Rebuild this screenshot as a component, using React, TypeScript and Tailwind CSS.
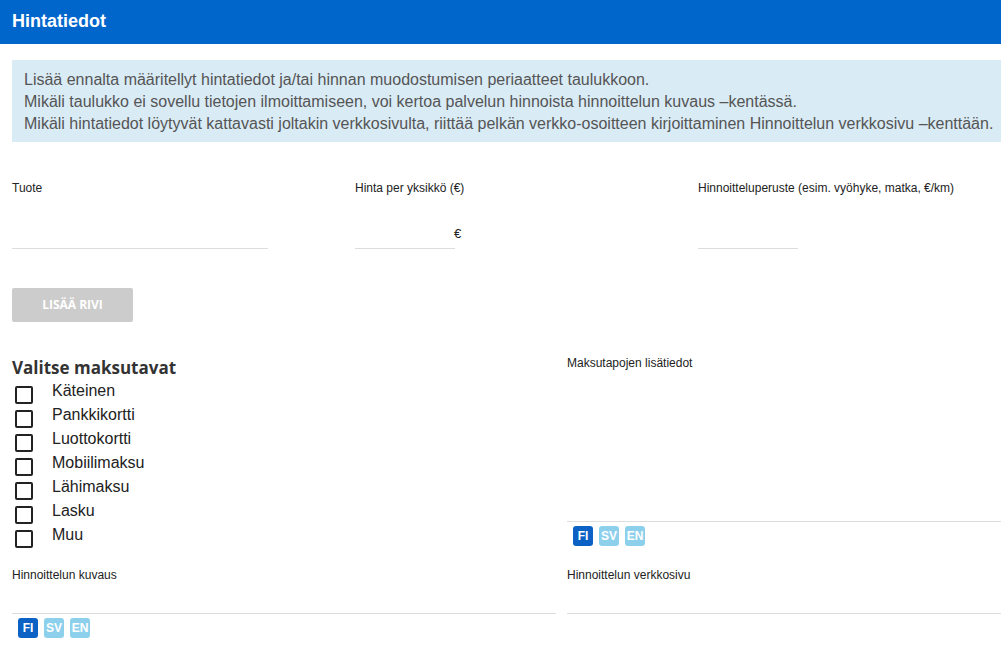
import React from "react";

const Badges = () => (
  <div className="flex gap-[6px]">
    <span className="w-[20px] h-[20px] rounded-[3px] bg-[#0b62c4] text-white text-[12px] font-bold flex items-center justify-center leading-none">FI</span>
    <span className="w-[20px] h-[20px] rounded-[3px] bg-[#8dd0ec] text-white text-[12px] font-bold flex items-center justify-center leading-none">SV</span>
    <span className="w-[20px] h-[20px] rounded-[3px] bg-[#8dd0ec] text-white text-[12px] font-bold flex items-center justify-center leading-none">EN</span>
  </div>
);

const methods = ["Käteinen", "Pankkikortti", "Luottokortti", "Mobiilimaksu", "Lähimaksu", "Lasku", "Muu"];

export default function App() {
  return (
    <div className="w-[1001px] h-[651px] overflow-hidden bg-white text-[#222]" style={{ fontFamily: '"Liberation Sans", Arial, sans-serif' }}>
      <div className="h-[44px] bg-[#0066cc] flex items-center pl-[12px]">
        <h1 className="text-white text-[18px] font-bold -mt-[2px]">Hintatiedot</h1>
      </div>
      <div className="pl-[12px]">
        <div className="mt-[16px] bg-[#d9ebf5] pl-[12px] pt-[9px] pb-[7px] text-[16px] leading-[22px] text-[#555] whitespace-nowrap">
          <div>Lisää ennalta määritellyt hintatiedot ja/tai hinnan muodostumisen periaatteet taulukkoon.</div>
          <div>Mikäli taulukko ei sovellu tietojen ilmoittamiseen, voi kertoa palvelun hinnoista hinnoittelun kuvaus –kentässä.</div>
          <div>Mikäli hintatiedot löytyvät kattavasti joltakin verkkosivulta, riittää pelkän verkko-osoitteen kirjoittaminen Hinnoittelun verkkosivu –kenttään.</div>
        </div>

        <div className="grid grid-cols-[343px_343px_1fr] mt-[39px]">
          <div>
            <div className="text-[12px] leading-[14px]">Tuote</div>
            <div className="mt-[53px] w-[256px] h-[1px] bg-[#ddd]" />
          </div>
          <div>
            <div className="text-[12px] leading-[14px]">Hinta per yksikkö (€)</div>
            <div className="flex items-end">
              <div className="mt-[53px] w-[100px] h-[1px] bg-[#ddd]" />
              <span className="text-[13px] leading-[14px] mb-[8px] -ml-[1px]">€</span>
            </div>
          </div>
          <div>
            <div className="text-[12px] leading-[14px]">Hinnoitteluperuste (esim. vyöhyke, matka, €/km)</div>
            <div className="mt-[53px] w-[100px] h-[1px] bg-[#ddd]" />
          </div>
        </div>

        <button className="mt-[39px] w-[121px] h-[34px] rounded-[2px] bg-[#cccccc] text-white text-[12px] font-bold flex items-center justify-center" style={{ fontFamily: '"Open Sans", sans-serif' }}>
          LISÄÄ RIVI
        </button>

        <div className="grid grid-cols-[544px_1fr] gap-x-[11px] mt-[30px]">
          <div>
            <div className="mt-[5px] text-[17px] leading-[22px] font-bold text-[#333]" style={{ fontFamily: '"Open Sans", sans-serif' }}>Valitse maksutavat</div>
            <div className="mt-[3px]">
              {methods.map((m) => (
                <div key={m} className="flex h-[24px]">
                  <div className="ml-[3px] mt-[4px] w-[18px] h-[18px] border-2 border-[#222] rounded-[2px]" />
                  <div className="ml-[19px] text-[16px] leading-[18px]">{m}</div>
                </div>
              ))}
            </div>
          </div>
          <div>
            <div className="mt-[4px] text-[12px] leading-[14px]">Maksutapojen lisätiedot</div>
            <div className="mt-[151px] h-[1px] bg-[#ddd]" />
            <div className="mt-[4px] ml-[6px]">
              <Badges />
            </div>
          </div>
        </div>

        <div className="grid grid-cols-[544px_1fr] gap-x-[11px] mt-[18px]">
          <div>
            <div className="text-[12px] leading-[14px]">Hinnoittelun kuvaus</div>
            <div className="mt-[31px] h-[1px] bg-[#ddd]" />
            <div className="mt-[4px] ml-[6px]">
              <Badges />
            </div>
          </div>
          <div>
            <div className="text-[12px] leading-[14px]">Hinnoittelun verkkosivu</div>
            <div className="mt-[31px] h-[1px] bg-[#ddd]" />
          </div>
        </div>
      </div>
    </div>
  );
}
